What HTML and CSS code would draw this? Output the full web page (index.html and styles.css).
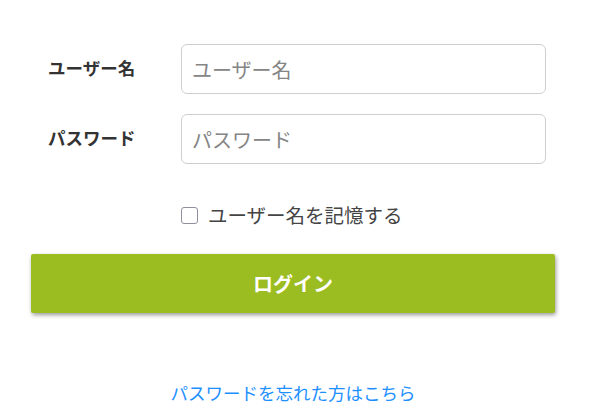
FILE: index.html
```html
<!DOCTYPE html>
<html lang="ja">
<head>
<meta charset="utf-8">
<title>ログイン</title>
<link rel="stylesheet" href="styles.css">
</head>
<body>
<form class="login">
  <div class="row">
    <label class="label" for="user">ユーザー名</label>
    <input class="field" id="user" type="text" placeholder="ユーザー名">
  </div>
  <div class="row">
    <label class="label" for="pass">パスワード</label>
    <input class="field" id="pass" type="password" placeholder="パスワード">
  </div>
  <label class="remember">
    <span class="check"></span>
    <span class="remember-text">ユーザー名を記憶する</span>
  </label>
  <button class="submit" type="button">ログイン</button>
  <div class="forgot"><a href="#">パスワードを忘れた方はこちら</a></div>
</form>
</body>
</html>
```

FILE: styles.css
```css
html, body {
  margin: 0;
  padding: 0;
  background: #fff;
}
body {
  font-family: "Noto Sans CJK JP", "Noto Sans", sans-serif;
  color: #333;
}
.login {
  width: 524px;
  padding: 44px 0 0 31px;
  display: flex;
  flex-direction: column;
}
.row {
  display: flex;
  align-items: center;
  margin-bottom: 20px;
}
.label {
  width: 150px;
  box-sizing: border-box;
  padding-left: 17px;
  padding-bottom: 4px;
  font-size: 17.5px;
  font-weight: bold;
  color: #333;
}
.field {
  width: 365px;
  height: 50px;
  box-sizing: border-box;
  border: 1px solid #cfcfcf;
  border-radius: 6px;
  padding: 0 10px;
  font-family: inherit;
  font-size: 20px;
  color: #333;
  outline: none;
}
.field::placeholder {
  color: #858585;
}
.remember {
  display: flex;
  align-items: center;
  margin: 17px 0 0 150px;
  height: 28px;
}
.check {
  width: 15px;
  height: 15px;
  border: 1px solid #8f8f9d;
  border-radius: 3px;
  margin-right: 10px;
  flex: none;
}
.remember-text {
  font-size: 19.5px;
  color: #444;
  line-height: 28px;
}
.submit {
  margin-top: 25px;
  height: 59px;
  width: 524px;
  border: none;
  border-radius: 2px;
  background: #9cbd21;
  color: #fff;
  font-family: inherit;
  font-size: 20px;
  font-weight: bold;
  box-shadow: 1px 2px 4px rgba(0, 0, 0, 0.4);
}
.forgot {
  margin-top: 68px;
  text-align: center;
  font-size: 17.5px;
  line-height: 24px;
}
.forgot a {
  color: #1e8fff;
  text-decoration: none;
}
```
